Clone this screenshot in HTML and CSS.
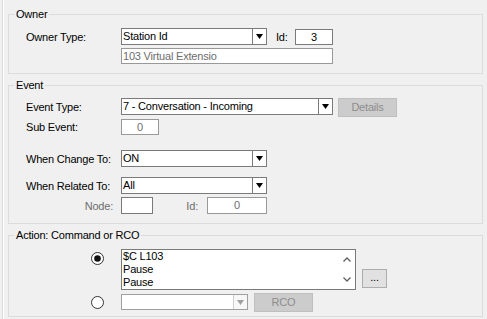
FILE: index.html
```html
<!DOCTYPE html>
<html>
<head>
<meta charset="utf-8">
<link rel="stylesheet" href="styles.css">
</head>
<body>
<div class="page">
  <fieldset class="group">
    <legend>Owner</legend>
    <div class="gbody owner">
      <div class="row">
        <span class="label">Owner Type:</span>
        <div class="combo w146"><span class="val">Station Id</span><span class="drop"><svg width="7" height="5" viewBox="0 0 7 5"><polygon points="0,0 7,0 3.5,5" fill="#000"/></svg></span></div>
        <span class="idlbl">Id:</span>
        <div class="tb center w38">3</div>
      </div>
      <div class="row r2">
        <span class="label"></span>
        <div class="tb dis w212">103 Virtual Extensio</div>
      </div>
    </div>
  </fieldset>

  <fieldset class="group next">
    <legend>Event</legend>
    <div class="gbody event">
      <div class="row">
        <span class="label">Event Type:</span>
        <div class="combo w212"><span class="val">7 - Conversation - Incoming</span><span class="drop"><svg width="7" height="5" viewBox="0 0 7 5"><polygon points="0,0 7,0 3.5,5" fill="#000"/></svg></span></div>
        <span class="btn disbtn details">Details</span>
      </div>
      <div class="row sub">
        <span class="label">Sub Event:</span>
        <div class="tb dis center w38">0</div>
      </div>
      <div class="row change">
        <span class="label">When Change To:</span>
        <div class="combo w146"><span class="val">ON</span><span class="drop"><svg width="7" height="5" viewBox="0 0 7 5"><polygon points="0,0 7,0 3.5,5" fill="#000"/></svg></span></div>
      </div>
      <div class="row related">
        <span class="label">When Related To:</span>
        <div class="combo w146"><span class="val">All</span><span class="drop"><svg width="7" height="5" viewBox="0 0 7 5"><polygon points="0,0 7,0 3.5,5" fill="#000"/></svg></span></div>
      </div>
      <div class="row node">
        <span class="label right grey">Node:</span>
        <div class="tb w32 tall"></div>
        <span class="idlbl2 grey">Id:</span>
        <div class="tb dis center w60 tall">0</div>
      </div>
    </div>
  </fieldset>

  <fieldset class="group next">
    <legend>Action: Command or RCO</legend>
    <div class="gbody action">
      <div class="arow">
        <span class="radio r1"><svg width="13" height="13" viewBox="0 0 13 13"><circle cx="6.5" cy="6.5" r="6" fill="#fff" stroke="#333"/><circle cx="6.5" cy="6.5" r="3.3" fill="#111"/></svg></span>
        <div class="list">
          <div class="items"><div>$C L103</div><div>Pause</div><div>Pause</div></div>
          <div class="sb">
            <svg width="8" height="5" viewBox="0 0 8 5"><polyline points="0.5,4.5 4,1 7.5,4.5" fill="none" stroke="#606060" stroke-width="1.3"/></svg>
            <svg width="8" height="5" viewBox="0 0 8 5"><polyline points="0.5,0.5 4,4 7.5,0.5" fill="none" stroke="#606060" stroke-width="1.3"/></svg>
          </div>
        </div>
        <span class="btn dots">...</span>
      </div>
      <div class="arow2">
        <span class="radio"><svg width="13" height="13" viewBox="0 0 13 13"><circle cx="6.5" cy="6.5" r="6" fill="#fff" stroke="#333"/></svg></span>
        <div class="combo dis w127"><span class="val"></span><span class="drop"><svg width="7" height="5" viewBox="0 0 7 5"><polygon points="0,0 7,0 3.5,5" fill="#a0a0a0"/></svg></span></div>
        <span class="btn disbtn rco">RCO</span>
      </div>
    </div>
  </fieldset>
</div>
</body>
</html>
```

FILE: styles.css
```css
* { box-sizing: border-box; }
html, body { margin: 0; padding: 0; background: #f0f0f0; }
body {
  font-family: "Liberation Sans", Arial, sans-serif;
  font-size: 11px;
  letter-spacing: -0.2px;
  color: #000;
  width: 487px;
  height: 319px;
  overflow: hidden;
}
.page {
  margin-left: 2px;
  height: 319px;
  border-left: 1px solid #dcdcdc;
  box-shadow: inset 1px 0 0 #fff;
  padding: 8px 4px 0 5px;
}
.group {
  margin: 0;
  padding: 0;
  border: 1px solid #dcdcdc;
  min-width: 0;
}
.group.next { margin-top: 5px; }
.group legend {
  margin-left: 5px;
  padding: 0 2px;
  line-height: 13px;
  height: 13px;
}
.gbody { padding: 0 0 9px 17px; }
.gbody.owner { padding-top: 7px; }
.gbody.event { padding-top: 6px; }
.gbody.action { padding: 7px 0 6px 82px; }

.row { display: flex; align-items: center; height: 17px; }
.row.r2 { margin-top: 3px; height: 16px; }
.row.sub { margin-top: 4px; height: 16px; }
.row.change { margin-top: 15px; }
.row.related { margin-top: 10px; }
.row.node { margin-top: 3px; }

.label { width: 95px; flex: none; white-space: nowrap; }
.label.right { text-align: right; padding-right: 8px; }
.grey { color: #6d6d6d; }
.idlbl { margin-left: 9px; width: 19px; flex: none; }
.idlbl2 { width: 54px; flex: none; text-align: right; padding-right: 9px; }

.combo {
  display: flex;
  flex: none;
  height: 17px;
  border: 1px solid #7a7a7a;
  background: #fff;
}
.combo .val { flex: 1; padding-left: 1px; line-height: 15px; white-space: nowrap; overflow: hidden; }
.combo .drop {
  width: 14px;
  flex: none;
  border-left: 1px solid #7a7a7a;
  display: flex;
  align-items: center;
  justify-content: center;
}
.combo.dis { height: 16px; border-color: #a0a0a0; }
.combo.dis .drop { border-left-color: #cfcfcf; background: #f7f7f7; }

.w146 { width: 146px; }
.w212 { width: 212px; }
.w127 { width: 127px; }
.w38 { width: 38px; }
.w32 { width: 32px; }
.w60 { width: 60px; }

.tb {
  flex: none;
  height: 16px;
  border: 1px solid #7a7a7a;
  background: #fff;
  line-height: 14px;
  padding-left: 1px;
  white-space: nowrap;
}
.tb.tall { height: 17px; line-height: 15px; }
.tb.center { text-align: center; padding-left: 0; }
.tb.dis { color: #6d6d6d; border-color: #999; }

.btn {
  flex: none;
  display: block;
  text-align: center;
  height: 19px;
  line-height: 17px;
}
.disbtn {
  width: 59px;
  background: #cccccc;
  border: 1px solid #bfbfbf;
  color: #8c8c8c;
}
.details { align-self: flex-start; margin-left: 5px; }
.rco { margin-left: 6px; }
.dots {
  width: 25px;
  margin: 20px 0 0 6px;
  background: #e1e1e1;
  border: 1px solid #adadad;
  line-height: 15px;
}

.arow { display: flex; align-items: flex-start; }
.arow2 { display: flex; align-items: center; height: 16px; margin-top: 4px; }
.radio { width: 13px; height: 13px; flex: none; margin-right: 17px; display: block; }
.radio svg { display: block; }
.radio.r1 { margin-top: 3px; }

.list {
  display: flex;
  flex: none;
  width: 235px;
  height: 41px;
  border: 1px solid #7a7a7a;
  background: #fff;
}
.items { flex: 1; padding-left: 1px; line-height: 13px; }
.sb {
  width: 17px;
  flex: none;
  display: flex;
  flex-direction: column;
  justify-content: space-between;
  align-items: center;
  padding: 7px 0 7px;
}
.sb svg { display: block; }
```
